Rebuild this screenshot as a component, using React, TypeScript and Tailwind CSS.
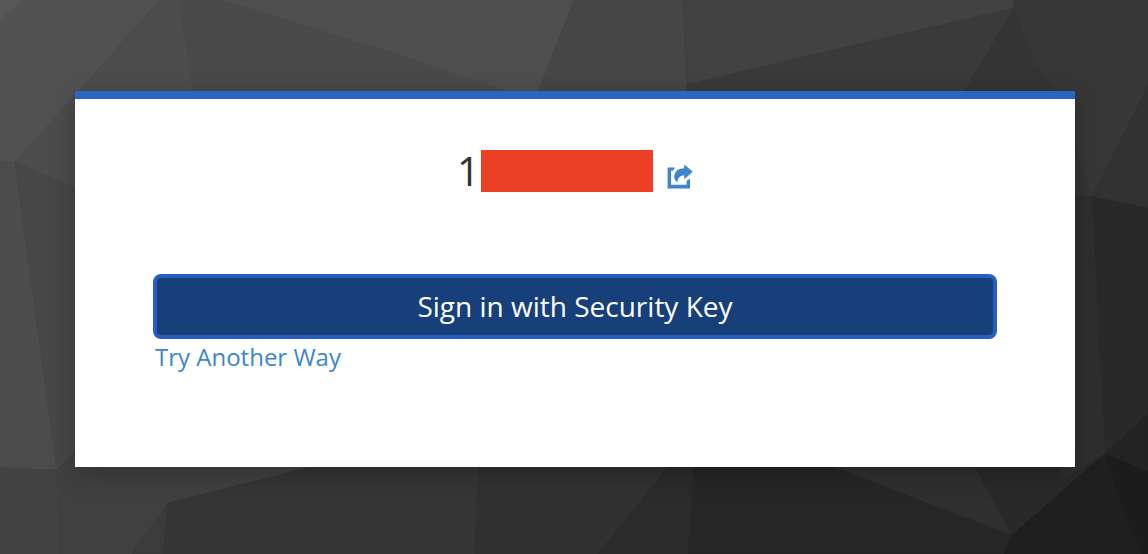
const facets: [string, string][] = [
  ['#515151', '0,0 160,0 80,90 15,162 0,162'],
  ['#575757', '0,0 22,0 0,20'],
  ['#4c4c4c', '160,0 180,0 193,92 193,240 75,188 15,162 80,90'],
  ['#494949', '180,0 222,0 400,55 515,92 515,240 193,240 193,92'],
  ['#4e4e4e', '222,0 574,0 538,94 515,94 400,55'],
  ['#464646', '574,0 683,0 687,92 687,200 515,200 538,92'],
  ['#424242', '683,0 1013,0 1014,8 748,70 687,85'],
  ['#3a3a3a', '687,85 748,70 1014,8 965,90 900,200 687,200'],
  ['#343434', '1014,8 1034,60 1060,100 1092,197 900,200 965,90'],
  ['#373737', '1013,0 1148,0 1148,86 1092,197 1060,100 1034,60 1014,8'],
  ['#323232', '1148,86 1148,208 1092,197'],
  ['#292929', '1092,197 1148,208 1148,414 1105,454'],
  ['#4c4c4c', '0,162 15,162 57,470 0,468'],
  ['#474747', '15,162 75,188 120,208 120,440 57,470'],
  ['#434343', '0,468 57,470 60,554 0,554'],
  ['#404040', '57,470 75,452 310,440 310,467 168,503 132,554 60,554'],
  ['#3b3b3b', '168,503 163,554 132,554'],
  ['#353535', '168,503 310,467 370,440 480,440 475,554 163,554'],
  ['#313131', '480,440 690,440 668,467 598,554 475,554'],
  ['#2b2b2b', '690,440 696,440 688,554 598,554 668,467'],
  ['#262626', '696,440 765,440 835,467 1012,535 1004,554 688,554'],
  ['#2f2f2f', '765,440 965,440 975,467 1012,535 835,467'],
  ['#292929', '965,440 1070,440 1105,454 1012,535 975,467'],
  ['#2e2e2e', '1060,196 1092,197 1105,454 1060,480'],
  ['#232323', '1148,414 1148,472 1105,454'],
  ['#1f1f1f', '1012,535 1105,454 1120,500 1142,554 1004,554'],
  ['#1c1c1c', '1105,454 1148,472 1148,554 1142,554 1120,500'],
];

function Backdrop() {
  return (
    <svg
      aria-hidden="true"
      viewBox="0 0 1148 554"
      preserveAspectRatio="none"
      className="absolute inset-0 h-full w-full"
    >
      {facets.map(([color, points]) => (
        <polygon key={points} points={points} fill={color} stroke={color} strokeWidth="0.6" />
      ))}
    </svg>
  );
}

function RestartIcon() {
  return (
    <svg aria-hidden="true" viewBox="0 0 26 26" className="h-[26px] w-[26px]" fill="currentColor">
      <path d="M0.6 3.6H8L6 6.8H4V20.8H19.6V17L23 14.4V24.4H0.6Z" />
      <path d="M17.2 0.4L25.8 7.8L17.2 15.2V11.4C13 11.2 10.8 13.4 10.6 18.2C8 16.8 6.7 14.2 7.4 11C8.3 6.8 11.8 4.3 17.2 4.2Z" />
    </svg>
  );
}

export default function App() {
  return (
    <main className="relative min-h-screen bg-[#3a3a3a] pt-[91px] pr-[73px] pb-[87px] pl-[75px] font-['Open_Sans',sans-serif]">
      <Backdrop />
      <section className="relative border-t-8 border-[#2b65c4] bg-white px-[78px] pt-[50px] pb-[92px] shadow-[0_6px_24px_rgba(0,0,0,0.25)]">
        <header className="flex h-[44px] items-center justify-center">
          <h1 className="flex items-center gap-px text-[40px] leading-[44px] text-[#333333]">
            1
            <span role="img" aria-label="Hidden username" className="h-[42px] w-[172px] bg-[#eb4026]" />
          </h1>
          <a href="#restart" aria-label="Restart login" className="ml-[14px] pt-3 text-[#3d86c9]">
            <RestartIcon />
          </a>
        </header>
        <form className="mt-[81px]" onSubmit={(event) => event.preventDefault()}>
          <button
            type="submit"
            className="block h-[65px] w-full rounded-lg border-4 border-[#285cc0] bg-[#173f7a] pb-0.5 text-[28px] leading-8 text-white"
          >
            Sign in with Security Key
          </button>
          <a href="#try-another-way" className="ml-0.5 block w-fit text-2xl leading-9 text-[#3d86c9]">
            Try Another Way
          </a>
        </form>
      </section>
    </main>
  );
}
